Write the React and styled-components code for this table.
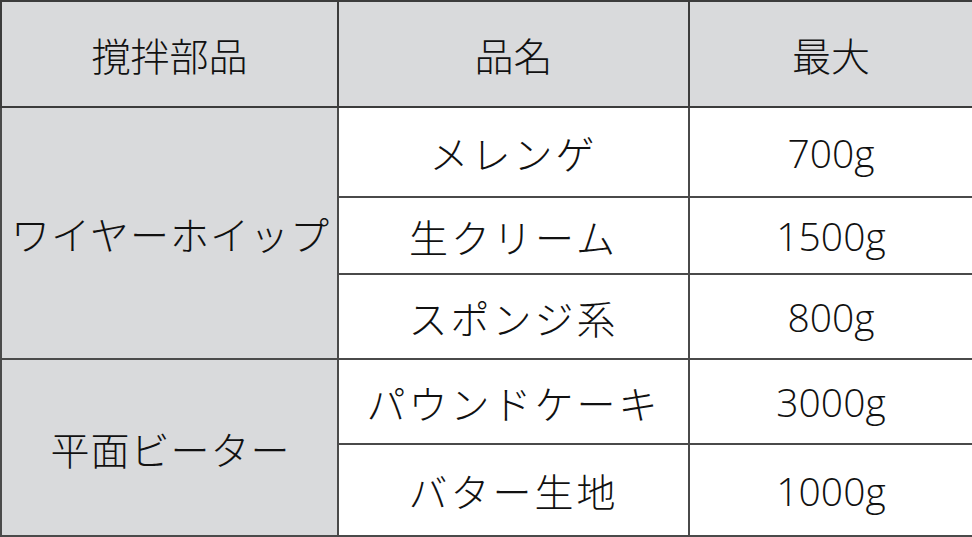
import React from "react";
import styled, { createGlobalStyle } from "styled-components";

const GlobalStyle = createGlobalStyle`
	html, body {
		margin: 0;
		padding: 0;
		background: #ffffff;
	}
	body {
		font-family: "Open Sans", "Noto Sans CJK JP", sans-serif;
	}
`;

const Table = styled.table`
	width: 972px;
	height: 536px;
	table-layout: fixed;
	border-collapse: collapse;
	color: #111;
`;

const HeadCell = styled.th`
	height: 104px;
	background: #d9dadc;
	border: 2px solid #3c3c3c;
	font-weight: 300;
	font-size: 39px;
	text-align: center;
	vertical-align: middle;
	padding: 0;
`;

const GroupCell = styled.td`
	background: #d9dadc;
	border: 2px solid #4a4a4a;
	font-size: 39px;
	font-weight: 300;
	text-align: center;
	padding: 0 0 0 2px;
	letter-spacing: 1px;
`;

const Cell = styled.td`
	height: ${(props) => props.h}px;
	border: 2px solid #4a4a4a;
	font-size: 39px;
	font-weight: 300;
	text-align: center;
	padding: 0;
	letter-spacing: ${(props) => (props.wide ? "3px" : "0")};
`;

const groups = [
	{
		name: "ワイヤーホイップ",
		items: [
			{ name: "メレンゲ", max: "700g", h: 88 },
			{ name: "生クリーム", max: "1500g", h: 75 },
			{ name: "スポンジ系", max: "800g", h: 83 },
		],
	},
	{
		name: "平面ビーター",
		items: [
			{ name: "パウンドケーキ", max: "3000g", h: 83 },
			{ name: "バター生地", max: "1000g", h: 90 },
		],
	},
];

export default function App() {
	return (
		<>
			<GlobalStyle />
			<Table>
				<colgroup>
					<col style={{ width: 337 }} />
					<col style={{ width: 351 }} />
					<col style={{ width: 284 }} />
				</colgroup>
				<thead>
					<tr>
						<HeadCell>撹拌部品</HeadCell>
						<HeadCell>品名</HeadCell>
						<HeadCell>最大</HeadCell>
					</tr>
				</thead>
				<tbody>
					{groups.map((group) =>
						group.items.map((item, index) => (
							<tr key={item.name}>
								{index === 0 && (
									<GroupCell rowSpan={group.items.length}>
										{group.name}
									</GroupCell>
								)}
								<Cell h={item.h} wide>
									{item.name}
								</Cell>
								<Cell h={item.h}>{item.max}</Cell>
							</tr>
						))
					)}
				</tbody>
			</Table>
		</>
	);
}
